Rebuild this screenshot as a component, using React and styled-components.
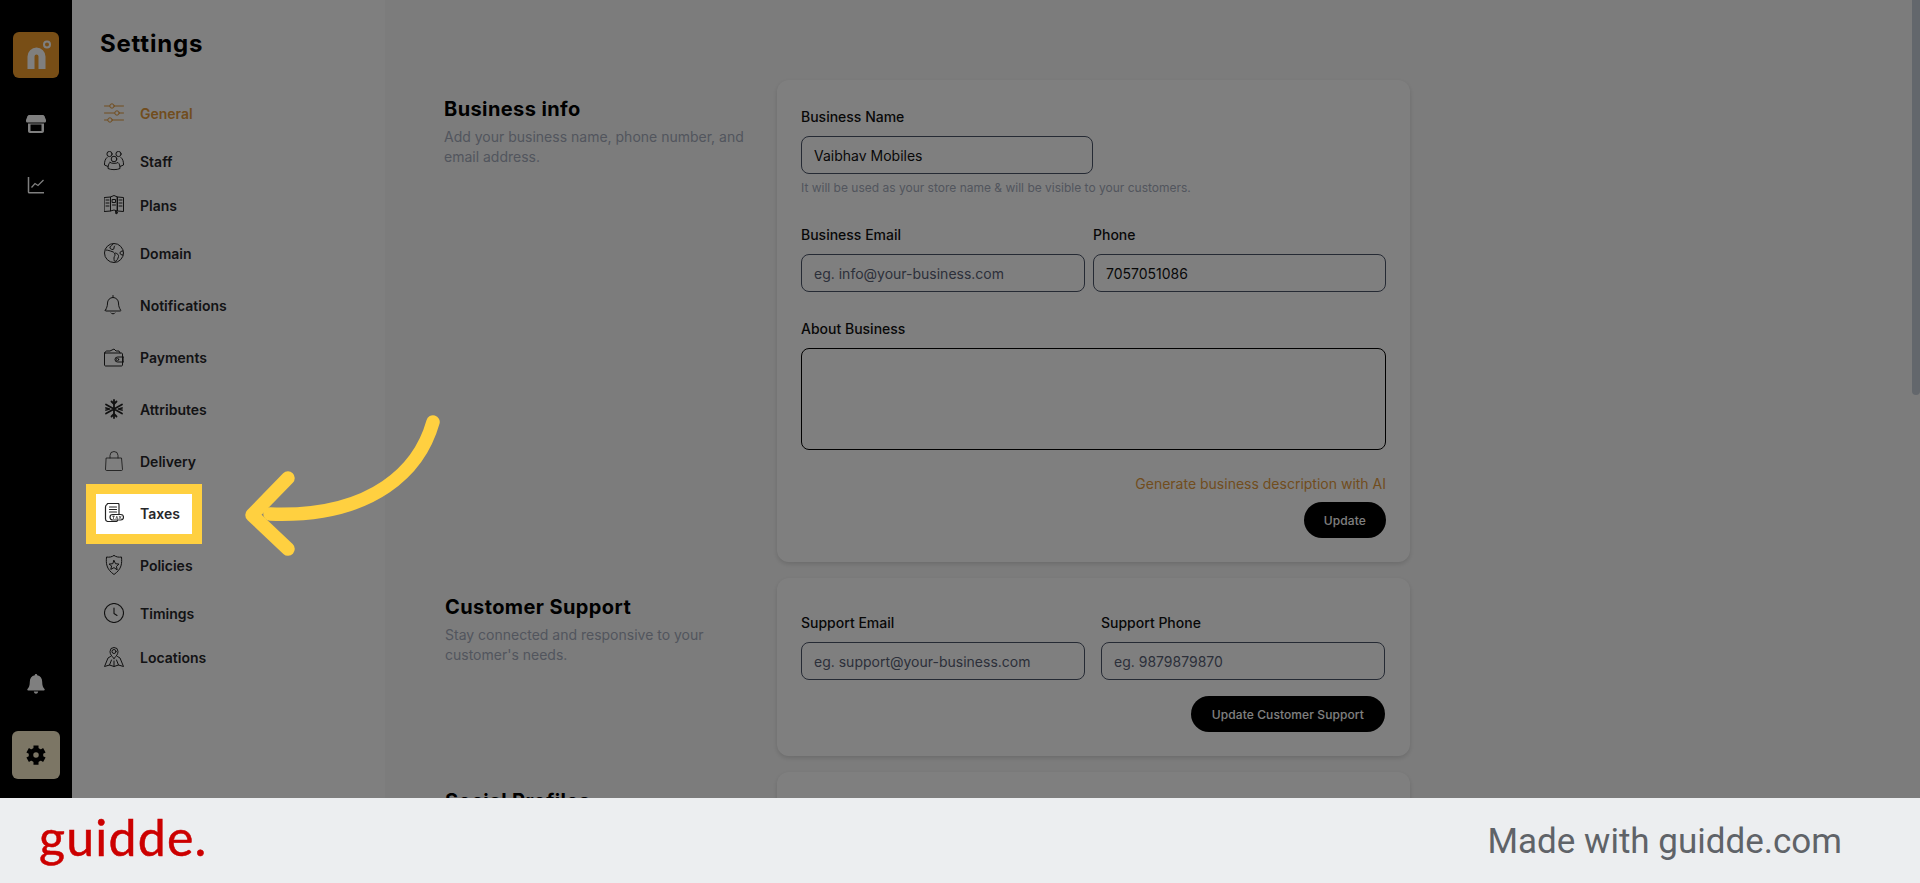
import React from "react";
import styled, { createGlobalStyle } from "styled-components";

const GlobalStyle = createGlobalStyle`
  * { box-sizing: border-box; }
  html, body { margin: 0; padding: 0; height: 100%; overflow: hidden; }
  body { font-family: Inter, "Liberation Sans", sans-serif; background: #eceef0; }
`;

const Screen = styled.div`
  display: flex;
  flex-direction: column;
  height: 883px;
`;

const Page = styled.div`
  position: relative;
  display: flex;
  height: 798px;
  overflow: hidden;
  background: #f9f9f9;
`;

const Rail = styled.aside`
  width: 72px;
  flex: none;
  background: #000;
  display: flex;
  flex-direction: column;
  align-items: center;
  padding: 32px 0 19px;
`;

const LogoTile = styled.div`
  width: 46px;
  height: 46px;
  border-radius: 6px;
  background: #f09c2c;
  display: flex;
  align-items: center;
  justify-content: center;
`;

const RailIcon = styled.div`
  width: 24px;
  height: 24px;
  margin-top: ${(p) => p.$top}px;
  color: #fff;
`;

const RailSpacer = styled.div`
  flex: 1;
`;

const GearTile = styled.div`
  width: 48px;
  height: 48px;
  margin-top: 35px;
  border-radius: 6px;
  background: #f8eccb;
  display: flex;
  align-items: center;
  justify-content: center;
`;

const SettingsPanel = styled.nav`
  width: 313px;
  flex: none;
  background: #fff;
  padding: 27px 0 0 28px;
`;

const PanelTitle = styled.h1`
  margin: 0 0 28px;
  font-size: 24px;
  line-height: 32px;
  font-weight: 700;
  letter-spacing: 0.8px;
  color: #000;
  position: relative;
  top: 1px;
`;

const NavList = styled.div`
  display: flex;
  flex-direction: column;
  padding-left: 4px;
`;

const NavItem = styled.div`
  position: relative;
  height: ${(p) => p.$h}px;
  display: flex;
  align-items: center;
  gap: 16px;
  font-size: 14px;
  font-weight: 600;
  color: ${(p) => (p.$active ? "#e39a3c" : "#27272a")};
`;

const NavIcon = styled.svg`
  width: 20px;
  height: 20px;
  flex: none;
  fill: none;
  stroke: currentColor;
  stroke-width: 1;
  stroke-linecap: round;
  stroke-linejoin: round;
  color: ${(p) => (p.$active ? "#e39a3c" : "#222")};
`;

const Spotlight = styled.div`
  position: absolute;
  left: -18px;
  top: -3px;
  width: 116px;
  height: 60px;
  border: 10px solid #ffd040;
  box-shadow: 0 0 0 3000px rgba(0, 0, 0, 0.5);
  z-index: 5;
`;

const Main = styled.main`
  flex: 1;
  padding: 80px 0 0 59px;
  display: flex;
  flex-direction: column;
  gap: 16px;
`;

const Section = styled.section`
  display: grid;
  grid-template-columns: 333px 633px;
`;

const SectionText = styled.div`
  padding-top: 17px;
  padding-left: ${(p) => p.$indent || 0}px;
`;

const SectionTitle = styled.h2`
  margin: 0 0 6px;
  font-size: 20px;
  line-height: 24px;
  font-weight: 700;
  letter-spacing: 0.4px;
  color: #000;
`;

const SectionSub = styled.p`
  margin: 0;
  width: 310px;
  font-size: 14px;
  line-height: 20px;
  color: #a4abbb;
`;

const Card = styled.div`
  background: #fff;
  border-radius: 12px;
  padding: ${(p) => p.$top}px 24px 24px;
  box-shadow: 0 2px 5px rgba(0, 0, 0, 0.14);
  min-height: ${(p) => p.$minH || 0}px;
`;

const Label = styled.label`
  display: block;
  margin-top: ${(p) => p.$top || 0}px;
  margin-bottom: 9px;
  font-size: 14px;
  line-height: 20px;
  font-weight: 500;
  color: #111;
`;

const TextInput = styled.input`
  display: block;
  width: ${(p) => p.$w || "100%"};
  height: 38px;
  padding: 0 12px;
  border: 1px solid #4b5468;
  border-radius: 8px;
  background: transparent;
  font-family: inherit;
  font-size: 14px;
  font-weight: 400;
  color: #111;
  outline: none;
  &::placeholder { color: #596074; opacity: 1; }
`;

const AboutBox = styled.textarea`
  display: block;
  width: 100%;
  height: 102px;
  border: 1px solid #000;
  border-radius: 8px;
  background: transparent;
  resize: none;
  outline: none;
`;

const Hint = styled.div`
  margin-top: 6px;
  font-size: 12px;
  line-height: 16px;
  color: #a4abbb;
`;

const FieldRow = styled.div`
  display: grid;
  grid-template-columns: ${(p) => (p.$wide ? "284px 293px" : "284px 284px")};
  column-gap: ${(p) => (p.$wide ? 8 : 16)}px;
  margin-top: ${(p) => p.$top || 0}px;
`;

const AiLink = styled.div`
  margin-top: 24px;
  text-align: right;
  font-size: 14px;
  line-height: 20px;
  color: #e39a3c;
`;

const ButtonRow = styled.div`
  display: flex;
  justify-content: flex-end;
  margin-top: ${(p) => p.$top}px;
  margin-right: ${(p) => p.$inset || 0}px;
`;

const PillButton = styled.button`
  height: 36px;
  padding: 0 ${(p) => p.$pad}px;
  border: none;
  border-radius: 18px;
  background: #000;
  color: #fff;
  font-family: inherit;
  font-size: 12px;
  font-weight: 500;
  letter-spacing: 0.1px;
`;

const ScrollThumb = styled.div`
  position: absolute;
  right: 0;
  top: 0;
  width: 8px;
  height: 395px;
  border-radius: 0 0 4px 4px;
  background: #c6ced8;
`;

const Arrow = styled.svg`
  position: absolute;
  left: 240px;
  top: 410px;
  z-index: 6;
`;

const Footer = styled.footer`
  height: 85px;
  flex: none;
  display: flex;
  align-items: center;
  justify-content: space-between;
  padding: 0 78px 0 39px;
  background: #eceef0;
`;

const Brand = styled.div`
  font-family: Lato, sans-serif;
  font-size: 50px;
  line-height: 60px;
  font-weight: 400;
  letter-spacing: 1.2px;
  -webkit-text-stroke: 0.5px #cc0000;
  color: #cc0000;
  margin-top: -8px;
`;

const MadeWith = styled.div`
  font-family: Roboto, sans-serif;
  font-size: 35px;
  font-weight: 400;
  color: #5f6368;
  margin-top: 2px;
`;

const navItems = [
  { label: "General", h: 52, active: true, icon: (
    <>
      <path d="M0.5 3h5M10.500 3h9M0.5 10h10M15.500 10h4M0.5 17h3M8.500 17h11" />
      <circle cx="8" cy="3" r="2.200" />
      <circle cx="13" cy="10" r="2.200" />
      <circle cx="6" cy="17" r="2.200" />
    </>
  ) },
  { label: "Staff", h: 44, icon: (
    <>
      <circle cx="5.500" cy="3" r="2.600" />
      <circle cx="14.500" cy="3" r="2.600" />
      <circle cx="10" cy="8" r="2.800" />
      <path d="M3 6.500C1 8 .4 11 .5 14l3.500 1.500M17 6.500c2 1.500 2.600 4.500 2.500 7.500l-3.500 1.500" />
      <path d="M6 11.500c-1.500 1-2 3.500-2 6 3 1.500 9 1.500 12 0 0-2.500-.5-5-2-6-1.500 1.200-6.500 1.200-8 0z" />
    </>
  ) },
  { label: "Plans", h: 44, icon: (
    <>
      <path d="M.5 2.500l6-.5v14l-6 .5zM6.500 2l3.500-1.500 3.500 1.500v14l-3.500-1-3.500 1M13.500 2l6 .5v14l-6-.5z" />
      <path d="M2 5h3M2 8h3M2 11h3M8.500 4.500h3v3h-3zM8.500 10h3M15 5h3M15 8h3M15 11h3" />
      <path d="M11.500 16l.5 3 1.500-1z" fill="currentColor" />
    </>
  ) },
  { label: "Domain", h: 52, icon: (
    <>
      <circle cx="10" cy="10" r="9.500" />
      <path d="M9 1c-.5 2-2.500 1.500-3 3-.5 1.500 1 2.500 3 2.500 1.500 0 .5-2.500 1.500-3.500M2 7c2 0 4 1 6 1.500 2 .5 3 2 3 3.500s-1 1-1 3 0 3 1 3.500c2-.5 3-3 3.500-5 .5-1.500-1-3-3-3.500" />
      <path d="M19 8c-1.500 0-3 .5-3 2s1.500 2 3 2" />
    </>
  ) },
  { label: "Notifications", h: 52, icon: (
    <>
      <path d="M9 .5v2M1.500 15c1-2 2-3.500 2-7 0-3 2.500-5.500 5.500-5.500s5.500 2.500 5.500 5.500c0 3.500 1 5 2 7 .5.500.5 1-.5 1H2c-.8 0-1-.5-.5-1z" />
      <path d="M7 18c.5 1.200 3.500 1.200 4 0" />
    </>
  ) },
  { label: "Payments", h: 52, icon: (
    <>
      <path d="M1 6h16.500c.5 0 1 .5 1 1v11c0 .5-.5 1-1 1H1.500c-.5 0-1-.5-1-1V6z" />
      <path d="M1 6c0-1.500 1-2 2-2h3l4-2 2 2h3l1 2" />
      <path d="M19.500 10h-6a2.500 2.500 0 0 0 0 5h6z" />
      <circle cx="13.500" cy="12.500" r="1.200" />
    </>
  ) },
  { label: "Attributes", h: 52, icon: (
    <g strokeWidth="1.800">
      <path d="M10 1v18M2 5.500l16 9M18 5.500l-16 9" />
      <path d="M7.500 2.500L10 5l2.500-2.500M7.500 17.500L10 15l2.500 2.500M2 9l3.500 1L2 11M18 9l-3.500 1 3.500 1" />
    </g>
  ) },
  { label: "Delivery", h: 52, icon: (
    <g strokeWidth="0.800">
      <path d="M2.500 7h15l1 11.500c0 .5-.3 1-1 1h-15c-.7 0-1-.5-1-1z" />
      <path d="M6 7V4.500a4 4 0 0 1 8 0V7" />
    </g>
  ) },
  { label: "Taxes", h: 52, spot: true, icon: (
    <g strokeWidth="1.200">
      <path d="M3 1.500c0-.5.5-1 1-1h10c.5 0 1 .5 1 1V11M3 1.500C2 2 1.500 3 1.500 4v12c0 1 .5 2 2 2.500h9c.5 0 1-.5 1-1.500" />
      <path d="M5.500 4h7M5.500 6.500h7M5.500 9h7" />
      <rect x="6" y="11.500" width="13.500" height="5.500" rx="2.700" />
      <path d="M8.500 13.200h2M9.500 13.200v2.400M12 15.600l.8-2.400.8 2.400M15.200 13.200l1.800 2.400M17 13.200l-1.800 2.400" strokeWidth=".7" />
    </g>
  ) },
  { label: "Policies", h: 52, icon: (
    <>
      <path d="M10 .5c2 1.500 5 2 7.500 1.500.5 6 .5 12-7.500 17.500C2 14 2 8 2.500 2 5 2.500 8 2 10 .5z" />
      <path d="M10 5.500l1.500 3.200 3.500.4-2.600 2.300.8 3.500L10 12.600l-3.200 1.800.8-3.500L5 9.100l3.500-.4z" />
    </>
  ) },
  { label: "Timings", h: 44, icon: (
    <>
      <circle cx="10" cy="10" r="9.500" strokeWidth="1.100" />
      <path d="M10 5v5.500l3 2" strokeWidth="1.100" />
    </>
  ) },
  { label: "Locations", h: 44, icon: (
    <>
      <path d="M10 11.500C7.500 9 6 7 6 4.500a4 4 0 0 1 8 0c0 2.500-1.500 4.500-4 7z" />
      <circle cx="10" cy="4.500" r="2" />
      <path d="M6.500 9.500L4 11 .5 19.500l5-1.500 4.500 1.500 4.500-1.500 5 1.500L16 11l-2.500-1.500M5.500 18l2-5M14.500 18l-2-5M10 19.500V14" />
    </>
  ) },
];

function SettingsNav() {
  return (
    <SettingsPanel>
      <PanelTitle>Settings</PanelTitle>
      <NavList>
        {navItems.map((item) => (
          <NavItem key={item.label} $h={item.h} $active={item.active}>
            <NavIcon viewBox="0 0 20 20" $active={item.active}>{item.icon}</NavIcon>
            {item.label}
            {item.spot && <Spotlight />}
          </NavItem>
        ))}
      </NavList>
    </SettingsPanel>
  );
}

function LeftRail() {
  return (
    <Rail>
      <LogoTile>
        <svg width="46" height="46" viewBox="0 0 46 46" fill="none" stroke="#fff">
          <path d="M18 37V24.500a5.500 5.500 0 0 1 11 0V37" strokeWidth="7" />
          <circle cx="34" cy="12.500" r="3" strokeWidth="2" />
        </svg>
      </LogoTile>
      <RailIcon $top={34}>
        <svg width="24" height="24" viewBox="0 0 24 24" fill="currentColor">
          <path d="M5.500 3h13c1 0 1.500.3 2 1.200L22 8v1c0 1-.7 1.500-1.500 1.500h-17C2.700 10.500 2 10 2 9V8l1.500-3.800C4 3.300 4.500 3 5.500 3z" />
          <path fillRule="evenodd" d="M4 11.500h16V19c0 1.200-.8 2-2 2H6c-1.200 0-2-.8-2-2zM6.500 12.500v6.500h11v-6.500z" />
        </svg>
      </RailIcon>
      <RailIcon $top={37}>
        <svg width="24" height="24" viewBox="0 0 24 24" fill="none" stroke="currentColor" strokeWidth="1.500">
          <path d="M4.500 4v15c0 .5.300.8.800.8H20" />
          <path d="M7.500 14.500l3.500-4 3 2 5.500-5.500" strokeWidth="1.300" />
        </svg>
      </RailIcon>
      <RailSpacer />
      <RailIcon $top={0}>
        <svg width="24" height="24" viewBox="0 0 24 24" fill="currentColor">
          <path d="M12 2c.7 0 1.200.5 1.200 1.200 3.300.6 5 3.200 5 6.800 0 3.500.8 5.500 2.300 7 .5.600.200 1.500-.7 1.500H4.200c-.9 0-1.200-.9-.7-1.500C5 15.500 5.800 13.500 5.800 10c0-3.600 1.700-6.200 5-6.800C10.800 2.500 11.300 2 12 2z" />
          <path d="M9.800 19.500h4.400c-.3 1.500-1.200 2.200-2.200 2.200s-1.900-.7-2.200-2.200z" />
        </svg>
      </RailIcon>
      <GearTile>
        <svg width="22" height="22" viewBox="0 0 24 24" fill="none" stroke="#000" strokeWidth="5">
          <circle cx="12" cy="12" r="5.500" />
          <path d="M12 1.500v4M12 18.500v4M2.900 6.800l3.500 2M17.600 15.200l3.500 2M2.900 17.200l3.500-2M17.600 8.800l3.500-2" strokeWidth="5.500" />
        </svg>
      </GearTile>
    </Rail>
  );
}

function BusinessInfo() {
  return (
    <Section>
      <SectionText>
        <SectionTitle>Business info</SectionTitle>
        <SectionSub>Add your business name, phone number, and email address.</SectionSub>
      </SectionText>
      <Card $top={27}>
        <Label>Business Name</Label>
        <TextInput $w="292px" defaultValue="Vaibhav Mobiles" readOnly />
        <Hint>It will be used as your store name &amp; will be visible to your customers.</Hint>
        <FieldRow $wide $top={29}>
          <div>
            <Label>Business Email</Label>
            <TextInput placeholder="eg. info@your-business.com" readOnly />
          </div>
          <div>
            <Label>Phone</Label>
            <TextInput defaultValue="7057051086" readOnly />
          </div>
        </FieldRow>
        <Label $top={27}>About Business</Label>
        <AboutBox readOnly />
        <AiLink>Generate business description with AI</AiLink>
        <ButtonRow $top={8}>
          <PillButton $pad={20}>Update</PillButton>
        </ButtonRow>
      </Card>
    </Section>
  );
}

function CustomerSupport() {
  return (
    <Section>
      <SectionText $indent={1}>
        <SectionTitle>Customer Support</SectionTitle>
        <SectionSub>Stay connected and responsive to your customer's needs.</SectionSub>
      </SectionText>
      <Card $top={35}>
        <FieldRow>
          <div>
            <Label>Support Email</Label>
            <TextInput placeholder="eg. support@your-business.com" readOnly />
          </div>
          <div>
            <Label>Support Phone</Label>
            <TextInput placeholder="eg. 9879879870" readOnly />
          </div>
        </FieldRow>
        <ButtonRow $top={16} $inset={1}>
          <PillButton $pad={21}>Update Customer Support</PillButton>
        </ButtonRow>
      </Card>
    </Section>
  );
}

export default function App() {
  return (
    <Screen>
      <GlobalStyle />
      <Page>
        <LeftRail />
        <SettingsNav />
        <Main>
          <BusinessInfo />
          <CustomerSupport />
          <Section>
            <SectionText $indent={1}>
              <SectionTitle>Social Profiles</SectionTitle>
            </SectionText>
            <Card $top={35} $minH={200} />
          </Section>
        </Main>
        <ScrollThumb />
        <Arrow width="210" height="150" viewBox="240 410 210 150" fill="none" stroke="#ffd040" strokeWidth="13.500" strokeLinecap="round" strokeLinejoin="round">
          <path d="M433 422C420 468 375 518 270 514" />
          <path d="M288 478L252 515L288 549" />
        </Arrow>
      </Page>
      <Footer>
        <Brand>guidde.</Brand>
        <MadeWith>Made with guidde.com</MadeWith>
      </Footer>
    </Screen>
  );
}
